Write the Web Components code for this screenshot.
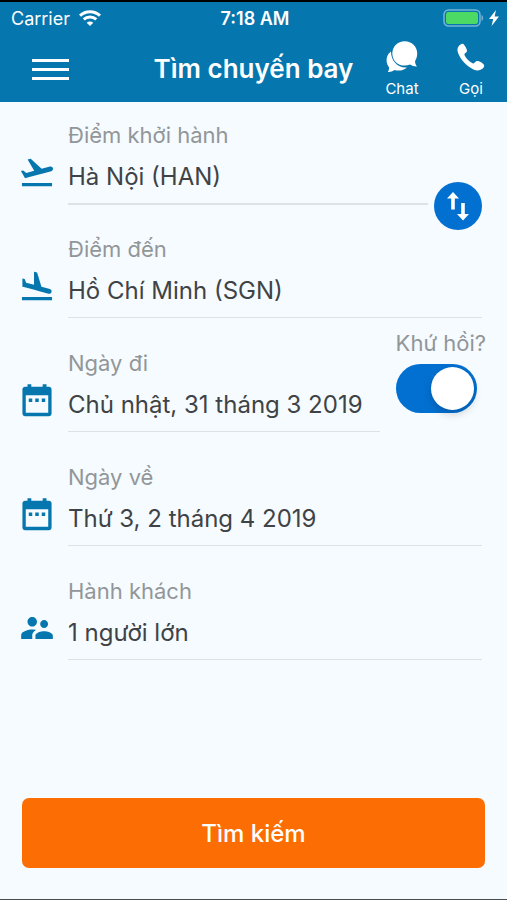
<!DOCTYPE html>
<html lang="vi">
<head>
<meta charset="utf-8">
<meta name="viewport" content="width=device-width, initial-scale=1">
<title>Tìm chuyến bay</title>
<style>
  body {
    margin: 0;
    font-family: Inter, "Liberation Sans", sans-serif;
    color: #3f4346;
    background: #f5fbff;
    --brand: #0676ae;
    --action: #0270d1;
    --muted: #929699;
    --line: #dce3e7;
  }
</style>
</head>
<body>
<flight-search></flight-search>

<script>
const ICONS = {
  takeoff: `<path d="M2.5 19h19v2h-19v-2zm19.57-9.36c-.21-.8-1.04-1.28-1.84-1.06L14.92 10l-6.9-6.43-1.93.51 4.14 7.17-4.97 1.33-1.97-1.54-1.45.39 1.82 3.16.77 1.33 1.6-.43 5.31-1.42 4.35-1.16L21 11.49c.81-.23 1.28-1.05 1.07-1.85z"/>`,
  landing: `<path d="M2.5 19h19v2h-19v-2zm7.18-4.73l4.35 1.16 5.31 1.42c.8.21 1.62-.26 1.84-1.06.21-.8-.26-1.62-1.06-1.84l-5.31-1.42-2.76-9.02L10.12 3v8.28L5.15 9.95l-.93-2.32-1.45-.39v5.17l1.6.43 5.31 1.43z"/>`,
  calendar: `<path fill-rule="evenodd" d="M6 2h2.400v1.700h7.200V2H18v1.700h1.500c1 0 1.700.7 1.700 1.700v15.100c0 1-.7 1.700-1.700 1.700h-15c-1 0-1.700-.7-1.700-1.700V5.400c0-1 .7-1.700 1.700-1.700H6zM4.900 9v11.100h14.200V9zM6.800 11h2.200v2.200H6.800zm4.100 0h2.200v2.200h-2.200zm4.100 0h2.200v2.200H15z"/>`,
  people: `<path d="M16.5 12c1.38 0 2.49-1.12 2.49-2.5S17.88 7 16.5 7C15.12 7 14 8.12 14 9.5s1.12 2.5 2.5 2.5zM9 11c1.66 0 2.99-1.34 2.99-3S10.66 5 9 5C7.34 5 6 6.34 6 8s1.34 3 3 3zm7.5 3c-1.83 0-5.5.92-5.5 2.75V19h11v-2.25c0-1.83-3.67-2.75-5.5-2.75zM9 13c-2.33 0-7 1.17-7 3.5V19h7v-2.25c0-.85.33-2.34 2.37-3.47C10.5 13.1 9.66 13 9 13z"/>`
};

class StatusBar extends HTMLElement {
  constructor() {
    super();
    this.attachShadow({ mode: "open" }).innerHTML = `
    <style>
      :host {
        display: grid;
        grid-template-columns: 1fr auto 1fr;
        align-items: center;
        height: 32px;
        padding: 0 8px 0 11px;
        border-top: 2px solid #000;
        font-size: 18px;
      }
      .carrier, .power { display: flex; align-items: center; }
      .carrier { gap: 9px; }
      .power { justify-content: flex-end; gap: 5px; }
      .time { font-weight: 600; }
      svg { display: block; }
    </style>
    <span class="carrier">Carrier
      <svg width="22" height="16" viewBox="0 0 22 16" fill="none" stroke="#fff" stroke-width="3">
        <path d="M1 5.6C6.6.3 15.4.3 21 5.6"/>
        <path d="M4.7 9.4c3.6-3.3 9-3.3 12.6 0"/>
        <path d="M11 16l-3.3-3.3c1.9-1.7 4.7-1.7 6.6 0z" fill="#fff" stroke="none"/>
      </svg>
    </span>
    <span class="time">7:18 AM</span>
    <span class="power">
      <svg width="41" height="18" viewBox="0 0 41 18">
        <rect x="1" y="1" width="36" height="16" rx="4.5" fill="none" stroke="#75b4d5" stroke-width="1.5"/>
        <rect x="3" y="3" width="32" height="12" rx="2.5" fill="#4cd964"/>
        <path d="M38.5 6c2.2.8 2.2 5.2 0 6z" fill="#75b4d5"/>
      </svg>
      <svg width="10" height="16" viewBox="0 0 10 16" fill="#fff"><path d="M7 0L0 9h4.2L2.6 16 10 6.5H5.6z"/></svg>
    </span>`;
  }
}

class NavAction extends HTMLElement {
  constructor() {
    super();
    this.attachShadow({ mode: "open" }).innerHTML = `
    <style>
      :host { display: block; }
      button {
        display: flex;
        flex-direction: column;
        align-items: center;
        gap: 7px;
        width: 52px;
        padding: 0;
        border: 0;
        background: none;
        color: inherit;
        font: inherit;
        font-size: 15px;
        line-height: 18px;
      }
    </style>
    <button type="button"><slot name="icon"></slot><span><slot></slot></span></button>`;
  }
}

class AppHeader extends HTMLElement {
  constructor() {
    super();
    this.attachShadow({ mode: "open" }).innerHTML = `
    <style>
      :host {
        display: block;
        height: 102px;
        box-sizing: border-box;
        background: var(--brand);
        color: #fff;
      }
      nav {
        display: grid;
        grid-template-columns: 1fr auto 1fr;
        align-items: center;
        height: 70px;
        padding: 0 10px 0 32px;
        box-sizing: border-box;
      }
      .menu {
        display: flex;
        flex-direction: column;
        gap: 6px;
        width: 37px;
        padding: 0;
        border: 0;
        background: none;
      }
      .menu i { height: 3px; background: #fff; }
      h1 {
        margin: 0;
        padding-right: 22px;
        font-size: 26px;
        font-weight: 600;
        line-height: 32px;
        white-space: nowrap;
      }
      .actions { display: flex; justify-content: flex-end; gap: 17px; }
      svg { display: block; }
    </style>
    <status-bar></status-bar>
    <nav>
      <button class="menu" type="button" aria-label="Menu"><i></i><i></i><i></i></button>
      <h1><slot></slot></h1>
      <div class="actions">
        <nav-action>
          <svg slot="icon" width="32" height="32" viewBox="0 0 32 32" fill="#fff">
            <path d="M5 10.500C1.500 13 .300 16.500.600 20c.200 2.500 1.100 4.500 2.400 6.200.300 1.300-.100 3-1.200 4.800 2.700.100 5-.700 6.800-2 4.600 1.300 9.400.300 12.400-2.600C12.500 27.300 5 20.500 5 10.500z"/>
            <path d="M18.700.200C11.700.200 6.300 5.500 6.300 12.400s5.400 12.200 12.400 12.200c2 0 3.800-.400 5.400-1.100 1.800 1.300 4.100 2 6.900 1.900-1.400-1.700-2-3.600-1.900-5.500 1.400-2.100 2.100-4.700 2.100-7.500C31.200 5.500 25.700.200 18.700.200z"/>
          </svg>
          Chat
        </nav-action>
        <nav-action>
          <svg slot="icon" width="32" height="32" viewBox="0 0 32 32" fill="#fff">
            <path d="M4 4.800C5.300 3.300 7.400 2 8.600 3.200c1.400 1.400 2.800 3.800 3.300 5.700.400 1.500-.400 2.300-1.500 3.200-1 .8-1.200 1.500-.700 2.500 1.600 3.100 4.200 5.700 7.400 7.500 1 .6 1.800.4 2.600-.5 1-1.200 1.900-2 3.300-1.500 2 .6 4.300 1.900 5.700 3.300 1.300 1.300-.200 3.500-1.800 4.700-2.200 1.700-5.300 1.700-8.500.300C11.800 25.300 6.100 19.500 3.300 12.600 2.100 9.600 2.100 7 4 4.800z"/>
          </svg>
          Gọi
        </nav-action>
      </div>
    </nav>`;
  }
}

class SearchField extends HTMLElement {
  constructor() {
    super();
    const icon = this.getAttribute("icon");
    this.attachShadow({ mode: "open" }).innerHTML = `
    <style>
      :host { display: flex; align-items: flex-start; }
      .icon { flex: none; width: 38px; height: 38px; margin: 32px 12px 0 0; fill: var(--brand); }
      .field {
        flex: 1;
        min-width: 0;
        display: flex;
        flex-direction: column;
        gap: 14px;
        padding-bottom: 12px;
        border-bottom: 1px solid var(--line);
      }
      :host([strong]) .field { border-bottom-width: 2px; margin-bottom: -1px; }
      label { font-size: 22px; line-height: 28px; color: var(--muted); }
      input {
        width: 100%;
        height: 28px;
        padding: 0;
        border: 0;
        outline: 0;
        background: none;
        color: inherit;
        font: inherit;
        font-size: 24px;
        line-height: 28px;
      }
    </style>
    <svg class="icon" viewBox="0 0 24 24" aria-hidden="true">${ICONS[icon]}</svg>
    <div class="field">
      <label for="value">${this.getAttribute("label")}</label>
      <input id="value" type="text" readonly value="${this.getAttribute("value")}">
    </div>
    <slot></slot>`;
  }
}

class SwapButton extends HTMLElement {
  constructor() {
    super();
    // hangs over the gap between the two airport fields
    this.attachShadow({ mode: "open" }).innerHTML = `
    <style>
      :host { display: block; align-self: flex-end; margin: 0 0 -26px 6px; }
      button {
        display: block;
        width: 48px;
        height: 48px;
        padding: 0;
        border: 0;
        border-radius: 50%;
        background: var(--action);
      }
      svg { display: block; }
    </style>
    <button type="button" aria-label="Đổi chiều">
      <svg width="48" height="48" viewBox="0 0 48 48" fill="#fff">
        <path d="M19 10l6 6.5h-4.2V27.500h-3.6V16.500H13z"/>
        <path d="M29 38.500l-6-6.500h4.200V21h3.600V32H35z"/>
      </svg>
    </button>`;
  }
}

class ToggleSwitch extends HTMLElement {
  constructor() {
    super();
    this.attachShadow({ mode: "open" }).innerHTML = `
    <style>
      :host {
        display: flex;
        flex-direction: column;
        gap: 7px;
        margin: -20px -4px 0 16px;
      }
      label { font-size: 22px; line-height: 28px; color: var(--muted); white-space: nowrap; }
      input {
        appearance: none;
        display: flex;
        align-items: center;
        width: 81px;
        height: 49px;
        margin: 0;
        padding: 3px;
        box-sizing: border-box;
        border-radius: 25px;
        background: #c9d1d6;
      }
      input::before {
        content: "";
        width: 43px;
        height: 43px;
        border-radius: 50%;
        background: #fff;
        box-shadow: 0 4px 8px rgba(0, 0, 0, .18);
      }
      input:checked { justify-content: flex-end; background: var(--action); }
    </style>
    <label for="toggle"><slot></slot></label>
    <input id="toggle" type="checkbox" role="switch" checked>`;
  }
}

class FlightSearch extends HTMLElement {
  constructor() {
    super();
    this.attachShadow({ mode: "open" }).innerHTML = `
    <style>
      :host {
        display: flex;
        flex-direction: column;
        min-height: 100vh;
        box-sizing: border-box;
        border-bottom: 1px solid #4a4d50;
      }
      form { flex: 1; display: flex; flex-direction: column; }
      .fields {
        display: flex;
        flex-direction: column;
        gap: 31px;
        padding: 19px 25px 31px 18px;
      }
      .submit {
        height: 70px;
        margin: auto 22px 31px;
        border: 0;
        border-radius: 7px;
        background: #fc6e03;
        color: #fff;
        font: inherit;
        font-size: 24px;
        font-weight: 500;
      }
    </style>
    <app-header>Tìm chuyến bay</app-header>
    <form>
      <div class="fields">
        <search-field strong icon="takeoff" label="Điểm khởi hành" value="Hà Nội (HAN)">
          <swap-button></swap-button>
        </search-field>
        <search-field icon="landing" label="Điểm đến" value="Hồ Chí Minh (SGN)"></search-field>
        <search-field icon="calendar" label="Ngày đi" value="Chủ nhật, 31 tháng 3 2019">
          <toggle-switch>Khứ hồi?</toggle-switch>
        </search-field>
        <search-field icon="calendar" label="Ngày về" value="Thứ 3, 2 tháng 4 2019"></search-field>
        <search-field icon="people" label="Hành khách" value="1 người lớn"></search-field>
      </div>
      <button class="submit" type="button">Tìm kiếm</button>
    </form>`;
  }
}

customElements.define("status-bar", StatusBar);
customElements.define("nav-action", NavAction);
customElements.define("app-header", AppHeader);
customElements.define("search-field", SearchField);
customElements.define("swap-button", SwapButton);
customElements.define("toggle-switch", ToggleSwitch);
customElements.define("flight-search", FlightSearch);
</script>
</body>
</html>
